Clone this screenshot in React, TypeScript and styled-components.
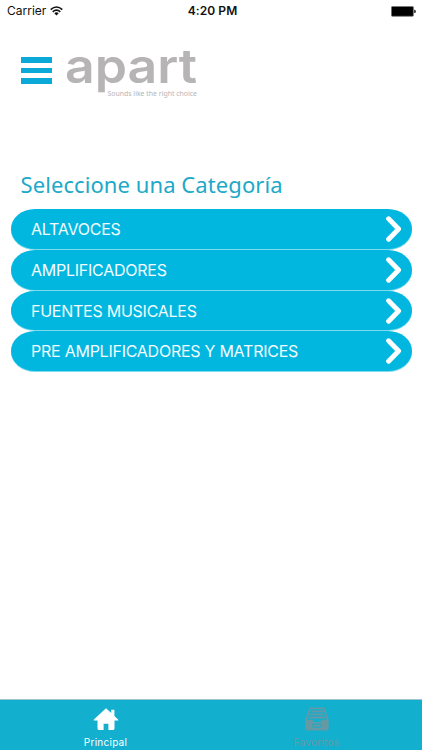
import React from "react";
import styled, { createGlobalStyle } from "styled-components";

const Global = createGlobalStyle`
  * { box-sizing: border-box; }
  body { margin: 0; background: #fff; }
`;

const Screen = styled.div`
  width: 422px;
  height: 750px;
  display: flex;
  flex-direction: column;
  background: #fff;
  font-family: Inter, sans-serif;
  overflow: hidden;
`;

const StatusBar = styled.header`
  height: 22px;
  flex: none;
  display: grid;
  grid-template-columns: 1fr auto 1fr;
  align-items: center;
  padding: 0 6px 0 7px;
  font-size: 12px;
  line-height: 22px;
  color: #111;
`;

const Carrier = styled.div`
  display: flex;
  align-items: center;
  gap: 4px;
`;

const Clock = styled.div`
  padding-left: 2px;
  font-weight: 600;
  font-size: 12px;
  letter-spacing: 0.1px;
`;

const BatterySlot = styled.div`
  display: flex;
  justify-content: flex-end;
`;

const Brand = styled.div`
  display: flex;
  height: 82px;
  flex: none;
  margin-top: 21px;
  padding-left: 21px;

  > svg { margin-top: -11px; }
`;

const MenuButton = styled.button`
  display: flex;
  flex-direction: column;
  flex: none;
  gap: 5px;
  width: 31px;
  margin: 14px 11px 0 0;
  padding: 0;
  border: 0;
  background: none;
`;

const MenuBar = styled.span`
  height: 5.7px;
  width: 31px;
  background: #0aa9d8;
`;

const Title = styled.h1`
  margin: 43px 0 0 20.5px;
  height: 41px;
  flex: none;
  font: 400 22px/32px "Noto Sans", sans-serif;
  letter-spacing: 0.08px;
  color: #20a9c8;
  white-space: nowrap;
`;

const List = styled.nav`
  display: grid;
  grid-template-rows: 40px 40px 39px 40px;
  row-gap: 1px;
  padding: 0 10.5px;
`;

const Category = styled.button`
  display: flex;
  align-items: center;
  justify-content: space-between;
  padding: 0 10px 0 20.5px;
  border: 0;
  border-radius: 24px / 20px;
  background: #02b7df;
  box-shadow: 0 1px 0 #80dbef;
  color: #f2fcff;
  font: 400 16px/38px Inter, sans-serif;
  letter-spacing: -0.25px;
  white-space: nowrap;
`;

const TabBar = styled.footer`
  display: grid;
  grid-template-columns: 1fr 1fr;
  height: 51px;
  margin-top: auto;
  border-top: 1px solid #a0c4cc;
  background: #12afce;
`;

const Tab = styled.div<{ $active?: boolean }>`
  display: flex;
  flex-direction: column;
  align-items: center;
  padding-top: 7px;
  color: ${(p) => (p.$active ? "#fff" : "#6799a5")};
  font-size: 10px;
  line-height: 12px;
  letter-spacing: 0.25px;

  svg { margin-bottom: 5px; }
`;

const categories = [
  "ALTAVOCES",
  "AMPLIFICADORES",
  "FUENTES MUSICALES",
  "PRE AMPLIFICADORES Y MATRICES",
];

const Wifi = () => (
  <svg width="13" height="10" viewBox="0 0 13 10" fill="none" stroke="#111" strokeWidth="1.6">
    <path d="M.7 3.6Q6.5-1.6 12.3 3.6M2.7 5.8Q6.5 2.5 10.3 5.8" />
    <path d="M4.3 7.2Q6.5 5.4 8.7 7.2L6.5 9.5Z" fill="#111" stroke="none" />
  </svg>
);

const Battery = () => (
  <svg width="25" height="11" viewBox="0 0 25 11">
    <rect x=".4" y=".5" width="22" height="9.8" rx="1" fill="#000" stroke="#777" strokeWidth=".8" />
    <path d="M23.2 3.8h.6q1 0 1 1.6t-1 1.6h-.6z" fill="#222" />
  </svg>
);

const Wordmark = () => (
  <svg width="144" height="76" viewBox="0 0 144 76" fill="#b6b4b5">
    <text x="2" y="51" fontFamily="Inter, sans-serif" fontSize="47" fontWeight="600" textLength="132" lengthAdjust="spacingAndGlyphs">apart</text>
    <text x="44.5" y="63.8" fontFamily="'Noto Sans', sans-serif" fontSize="7" textLength="89.5" lengthAdjust="spacingAndGlyphs">Sounds like the right choice</text>
  </svg>
);

const Chevron = () => (
  <svg width="16" height="26" viewBox="0 0 16 26" fill="none" stroke="#fff" strokeWidth="4.9" strokeLinecap="round" strokeLinejoin="round">
    <path d="M2.6 2.8 12.6 13 2.6 23.2" />
  </svg>
);

const Home = () => (
  <svg width="26" height="24" viewBox="0 0 26 24" fill="#fff">
    <path d="M13 1.2.9 12.4q-.9 1.2.7 1.2h2.9v7.9q0 1.4 1.4 1.4h4.7v-6.2h4.8v6.2h4.7q1.4 0 1.4-1.4v-7.9h2.9q1.6 0 .7-1.2L21.4 8.9V2.8h-3.2v3.1Z" />
  </svg>
);

const Drawer = () => (
  <svg width="24" height="24" viewBox="0 0 24 24" fill="none" stroke="#6799a5">
    <path d="M5 1.2h14L22.8 13v8q0 1.8-1.8 1.8H3q-1.8 0-1.8-1.8v-8Z" strokeWidth="1.6" />
    <path d="M6 4.3h12M5.2 7.4h13.6M4.2 10.5h15.6" strokeWidth="1.8" />
    <path d="M1 12.8h6.5q.4 2.2 1.8 2.2h5.4q1.4 0 1.8-2.2H23v10H1Z" fill="#6799a5" stroke="none" />
    <rect x="7.8" y="17" width="8.4" height="3.3" rx=".7" stroke="#12afce" strokeWidth="1" />
  </svg>
);

export default function App() {
  return (
    <Screen>
      <Global />
      <StatusBar>
        <Carrier>Carrier <Wifi /></Carrier>
        <Clock>4:20 PM</Clock>
        <BatterySlot><Battery /></BatterySlot>
      </StatusBar>
      <Brand>
        <MenuButton aria-label="Menu"><MenuBar /><MenuBar /><MenuBar /></MenuButton>
        <Wordmark />
      </Brand>
      <Title>Seleccione una Categoría</Title>
      <List>
        {categories.map((name) => (
          <Category key={name}>
            {name}
            <Chevron />
          </Category>
        ))}
      </List>
      <TabBar>
        <Tab $active><Home />Principal</Tab>
        <Tab><Drawer />Favoritos</Tab>
      </TabBar>
    </Screen>
  );
}
